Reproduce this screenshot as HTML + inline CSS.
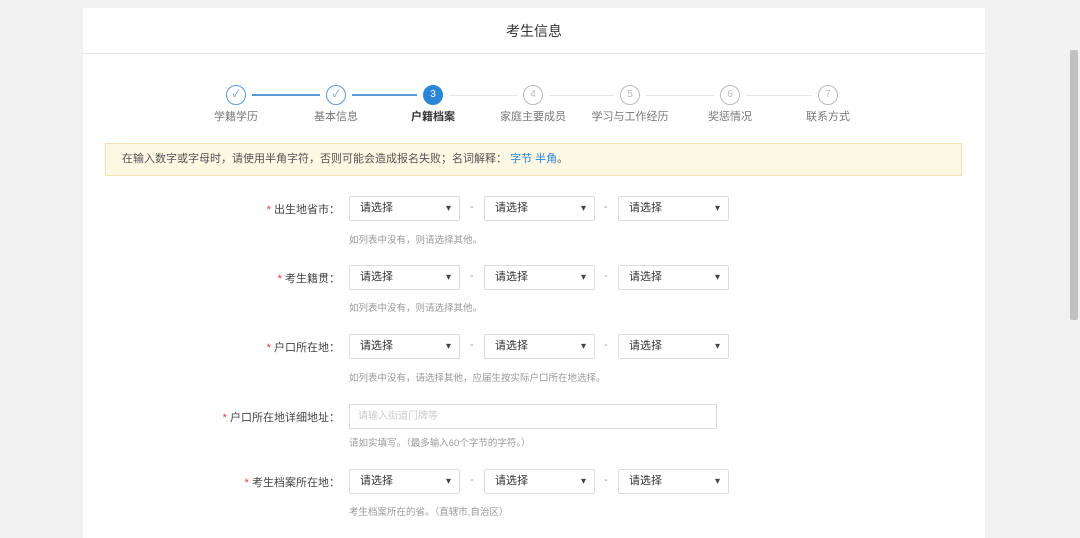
<!DOCTYPE html>
<html><head><meta charset="utf-8"><style>
*{margin:0;padding:0;box-sizing:border-box}
body{width:1080px;height:530px;overflow:hidden;background:#f1f1f1;font-family:"Liberation Sans","Noto Sans CJK SC",sans-serif;position:relative;color:#555}
.card{position:absolute;left:83px;top:8px;width:902px;height:530px;background:#fff}
.hd{height:46px;border-bottom:1px solid #e6e6e6;text-align:center;line-height:46px;font-size:14px;color:#333}
.abs{position:absolute}
.c{width:20px;height:20px;border-radius:50%;border:1px solid #bbb;font-size:10px;text-align:center;line-height:18px;color:#bbb;background:#fff}
.c.d{border-color:#5a9bd5;color:#5a9bd5}
.c.a{background:#2b86d8;border-color:#2b86d8;color:#fff}
.ln{height:1px;background:#e6e6e6}
.ln.d{background:#5a9bd5;height:2px}
.lb{font-size:11px;color:#777;width:100px;text-align:center}
.warn{left:22px;top:135px;width:857px;height:33px;background:#fcf8e3;border:1px solid #f4e2b0;font-size:11px;line-height:31px;padding-left:16px;color:#555}
.sel{width:111px;height:25px;border:1px solid #ddd;border-radius:2px;font-size:11px;line-height:23px;padding-left:10px;color:#333}
.sel:after{content:"▾";position:absolute;right:8px;font-size:10px;color:#444}
.fl{font-size:11px;color:#444;text-align:right;width:200px}
.fl b{color:#e33;font-weight:normal}
.hint{font-size:9.5px;color:#999}
.dash{font-size:11px;color:#999}
</style></head><body>
<div class="card">
<div class="hd">考生信息</div>
</div>
<div class="abs" style="left:1068px;top:0;width:12px;height:530px;background:#f1f1f1"></div>
<div class="abs" style="left:1070px;top:50px;width:8px;height:270px;background:#c1c1c1;border-radius:2px"></div>

<div class="abs ln d" style="left:252px;top:94px;width:68px"></div>
<div class="abs ln d" style="left:352px;top:94px;width:65px"></div>
<div class="abs ln" style="left:449px;top:95px;width:68px"></div>
<div class="abs ln" style="left:549px;top:95px;width:65px"></div>
<div class="abs ln" style="left:646px;top:95px;width:68px"></div>
<div class="abs ln" style="left:746px;top:95px;width:66px"></div>
<div class="abs c d" style="left:226px;top:85px">✓</div>
<div class="abs c d" style="left:326px;top:85px">✓</div>
<div class="abs c a" style="left:423px;top:85px">3</div>
<div class="abs c" style="left:523px;top:85px">4</div>
<div class="abs c" style="left:620px;top:85px">5</div>
<div class="abs c" style="left:720px;top:85px">6</div>
<div class="abs c" style="left:818px;top:85px">7</div>
<div class="abs lb" style="left:186px;top:108px">学籍学历</div>
<div class="abs lb" style="left:286px;top:108px">基本信息</div>
<div class="abs lb" style="left:383px;top:108px;color:#333;font-weight:bold">户籍档案</div>
<div class="abs lb" style="left:483px;top:108px">家庭主要成员</div>
<div class="abs lb" style="left:580px;top:108px">学习与工作经历</div>
<div class="abs lb" style="left:680px;top:108px">奖惩情况</div>
<div class="abs lb" style="left:778px;top:108px">联系方式</div>

<div class="abs warn" style="left:105px;top:143px">在输入数字或字母时，请使用半角字符，否则可能会造成报名失败；名词解释： <span style="color:#2b86d8">字节 半角</span>。</div>

<div class="abs fl" style="left:140px;top:201px"><b>*</b> 出生地省市：</div>
<div class="abs sel" style="left:349px;top:196px">请选择</div><div class="abs dash" style="left:470px;top:201px">-</div>
<div class="abs sel" style="left:484px;top:196px">请选择</div><div class="abs dash" style="left:604px;top:201px">-</div>
<div class="abs sel" style="left:618px;top:196px">请选择</div>
<div class="abs hint" style="left:349px;top:232px">如列表中没有，则请选择其他。</div>

<div class="abs fl" style="left:140px;top:270px"><b>*</b> 考生籍贯：</div>
<div class="abs sel" style="left:349px;top:265px">请选择</div><div class="abs dash" style="left:470px;top:270px">-</div>
<div class="abs sel" style="left:484px;top:265px">请选择</div><div class="abs dash" style="left:604px;top:270px">-</div>
<div class="abs sel" style="left:618px;top:265px">请选择</div>
<div class="abs hint" style="left:349px;top:300px">如列表中没有，则请选择其他。</div>

<div class="abs fl" style="left:140px;top:339px"><b>*</b> 户口所在地：</div>
<div class="abs sel" style="left:349px;top:334px">请选择</div><div class="abs dash" style="left:470px;top:339px">-</div>
<div class="abs sel" style="left:484px;top:334px">请选择</div><div class="abs dash" style="left:604px;top:339px">-</div>
<div class="abs sel" style="left:618px;top:334px">请选择</div>
<div class="abs hint" style="left:349px;top:370px">如列表中没有，请选择其他，应届生按实际户口所在地选择。</div>

<div class="abs fl" style="left:140px;top:409px"><b>*</b> 户口所在地详细地址：</div>
<div class="abs" style="left:349px;top:404px;width:368px;height:25px;border:1px solid #ddd;font-size:10px;line-height:23px;padding-left:8px;color:#ccc">请输入街道门牌等</div>
<div class="abs hint" style="left:349px;top:435px">请如实填写。（最多输入60个字节的字符。）</div>

<div class="abs fl" style="left:140px;top:474px"><b>*</b> 考生档案所在地：</div>
<div class="abs sel" style="left:349px;top:469px">请选择</div><div class="abs dash" style="left:470px;top:474px">-</div>
<div class="abs sel" style="left:484px;top:469px">请选择</div><div class="abs dash" style="left:604px;top:474px">-</div>
<div class="abs sel" style="left:618px;top:469px">请选择</div>
<div class="abs hint" style="left:349px;top:504px">考生档案所在的省。（直辖市,自治区）</div>
</body></html>
